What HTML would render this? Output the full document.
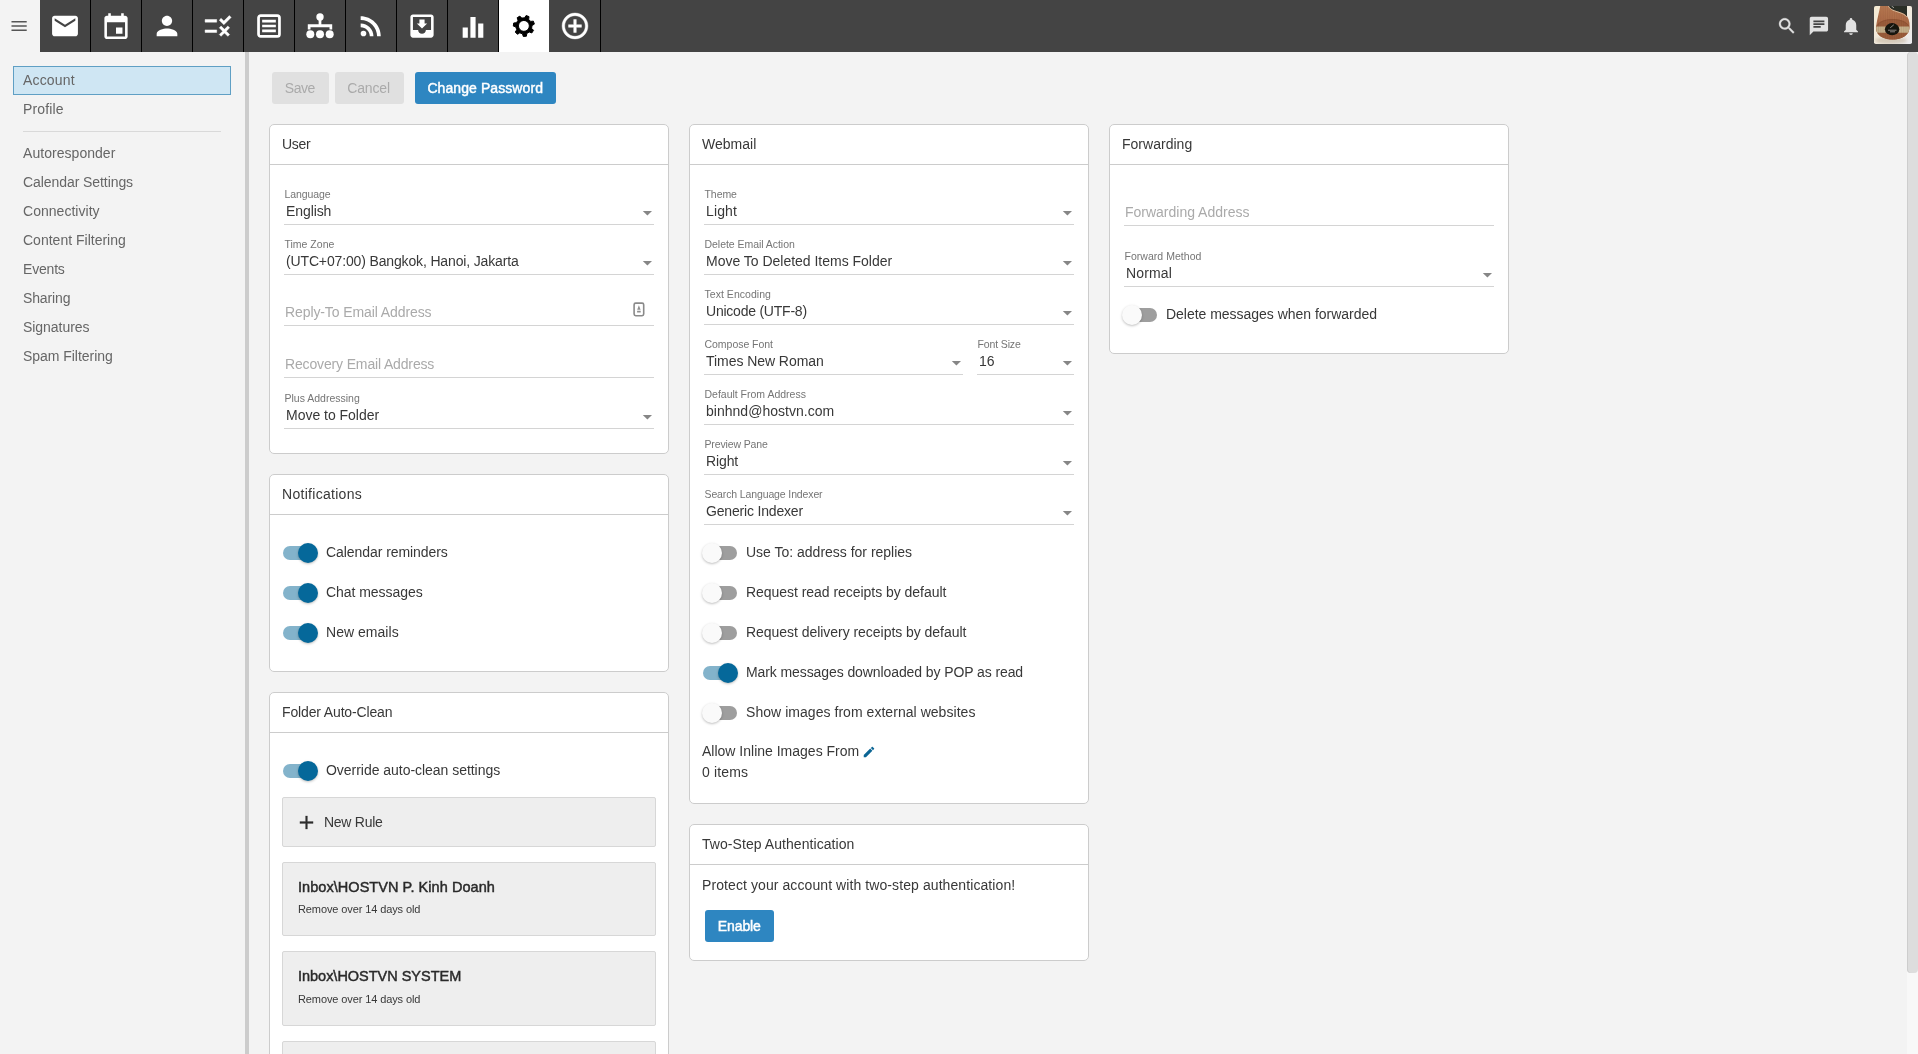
<!DOCTYPE html><html lang="en"><head><meta charset="utf-8"><title>Settings - Account</title><style>
*{box-sizing:border-box;margin:0;padding:0}
html,body{width:1918px;height:1054px;overflow:hidden}
body{background:#f3f3f3;font-family:"Liberation Sans",sans-serif;font-size:14px;color:#383838;position:relative}
#w{position:absolute;left:0;top:0;width:1918px;height:1054px;overflow:hidden;will-change:transform}
.a,.ic,.t{position:absolute}
.t{white-space:nowrap;line-height:20px;font-size:14px}
.ic{display:block}
#top{left:40px;top:0;width:1878px;height:52px;background:#444}
.sep{top:0;width:1px;height:52px;background:#000}
.side{color:#666}
.card{background:#fff;border:1px solid #ccc;border-radius:5px}
.hd{height:1px;background:#ccc}
.ul{height:1px;background:#d4d4d4}
.lb{font-size:10.5px;line-height:14px;color:#757575}
.ph{color:#aaa}
.btn{border-radius:3px;height:32px}
.bar{width:34px;height:14px;border-radius:7px}
.th{width:20px;height:20px;border-radius:50%;box-shadow:0 1px 2.5px rgba(0,0,0,.26)}
.rule{background:#eee;border:1px solid #d7d7d7;border-radius:2px}
.md{-webkit-text-stroke:.45px currentColor}
.b{font-size:14.5px;color:#2a2a2a}
.sm{font-size:11px;line-height:14px}
</style></head><body><div id="w">
<div class="a" id="top"></div>
<svg class="ic" style="left:8px;top:15px" width="23" height="23" viewBox="0 0 23 23"><g transform="translate(0.950 0.850) scale(0.84583)"><path fill="#555" d="M3 18h18v-2H3v2zm0-5h18v-2H3v2zm0-7v2h18V6H3z"/></g></svg>
<svg class="ic" style="left:49px;top:10px" width="33" height="33" viewBox="0 0 33 33"><g transform="translate(0.500 0.500) scale(1.29167)"><path fill="#fff" d="M20 4H4c-1.1 0-1.99.9-1.99 2L2 18c0 1.1.9 2 2 2h16c1.1 0 2-.9 2-2V6c0-1.1-.9-2-2-2zm0 4l-8 5-8-5V6l8 5 8-5v2z"/></g></svg>
<div class="a sep" style="left:90px"></div>
<svg class="ic" style="left:100px;top:11px" width="33" height="33" viewBox="0 0 33 33"><g transform="translate(0.500 0.900) scale(1.29167)"><path fill="#fff" d="M17 12h-5v5h5v-5zM16 1v2H8V1H6v2H5c-1.11 0-1.99.9-1.99 2L3 19c0 1.1.89 2 2 2h14c1.1 0 2-.9 2-2V5c0-1.1-.9-2-2-2h-1V1h-2zm3 18H5V8h14v11z"/></g></svg>
<div class="a sep" style="left:141px"></div>
<svg class="ic" style="left:151px;top:10px" width="33" height="33" viewBox="0 0 33 33"><g transform="translate(0.500 0.500) scale(1.29167)"><path fill="#fff" d="M12 12c2.21 0 4-1.79 4-4s-1.79-4-4-4-4 1.79-4 4 1.79 4 4 4zm0 2c-2.67 0-8 1.34-8 4v2h16v-2c0-2.66-5.33-4-8-4z"/></g></svg>
<div class="a sep" style="left:192px"></div>
<svg class="ic" style="left:202px;top:10px" width="33" height="33" viewBox="0 0 33 33"><g transform="translate(0.500 0.500) scale(1.29167)"><path fill="#fff" stroke="#fff" stroke-width="0.35" d="M16.54 11L13 7.46l1.41-1.41 2.12 2.12 4.24-4.24 1.41 1.41L16.54 11zM11 7H2v2h9V7zm10 6.41L19.59 12 17 14.59 14.41 12 13 13.41 15.59 16 13 18.59 14.41 20 17 17.41 19.59 20 21 18.59 18.41 16 21 13.41zM11 15H2v2h9v-2z"/></g></svg>
<div class="a sep" style="left:243px"></div>
<svg class="ic" style="left:253px;top:10px" width="33" height="33" viewBox="0 0 33 33"><g transform="translate(0.500 0.500) scale(1.29167)"><rect x="3.9" y="3.9" width="16.2" height="16.2" rx="1.7" fill="none" stroke="#fff" stroke-width="2.1"/><path fill="#fff" d="M6.7 7.2h10.6v2H6.7zM6.7 11h10.6v2H6.7zM6.7 14.800h10.6v2H6.7z"/></g></svg>
<div class="a sep" style="left:294px"></div>
<svg class="ic" style="left:304px;top:10px" width="33" height="33" viewBox="0 0 33 33"><g transform="translate(0.500 0.500) scale(1.29167)"><g fill="#fff"><circle cx="12" cy="5" r="2.85"/><circle cx="4.500" cy="18.300" r="3.100"/><circle cx="12" cy="18.300" r="3.100"/><circle cx="19.500" cy="18.300" r="3.100"/><path d="M10.950 7h2.100v3.700h8.400v4.100h-2.100v-1.900H4.650v1.900H2.550v-4.100h8.400z"/></g></g></svg>
<div class="a sep" style="left:345px"></div>
<svg class="ic" style="left:355px;top:10px" width="33" height="33" viewBox="0 0 33 33"><g transform="translate(0.500 0.500) scale(1.29167)"><path fill="#fff" d="M6.18 15.64a2.18 2.18 0 1 0 0 4.36 2.18 2.18 0 0 0 0-4.36zM4 4.44v2.83c7.03 0 12.73 5.7 12.73 12.73h2.83c0-8.59-6.97-15.56-15.56-15.56zm0 5.66v2.83c3.9 0 7.07 3.17 7.07 7.07h2.83c0-5.47-4.43-9.9-9.9-9.9z"/></g></svg>
<div class="a sep" style="left:396px"></div>
<svg class="ic" style="left:406px;top:10px" width="33" height="33" viewBox="0 0 33 33"><g transform="translate(0.500 0.500) scale(1.29167)"><path fill="#fff" d="M19 3H4.99c-1.11 0-1.98.9-1.98 2L3 19c0 1.1.88 2 1.99 2H19c1.1 0 2-.9 2-2V5c0-1.1-.9-2-2-2zm0 12h-4c0 1.66-1.35 3-3 3s-3-1.34-3-3H4.99V5H19v10zm-3-5h-2V7h-4v3H8l4 4 4-4z"/></g></svg>
<div class="a sep" style="left:447px"></div>
<svg class="ic" style="left:457px;top:11px" width="33" height="33" viewBox="0 0 33 33"><g transform="translate(0.500 0.900) scale(1.29167)"><path fill="#fff" d="M10 20h4V4h-4v16zm-6 0h4v-8H4v8zM16 9v11h4V9h-4z"/></g></svg>
<div class="a sep" style="left:498px"></div>
<div class="a" style="left:499px;top:0;width:50px;height:52px;background:#fff"></div>
<svg class="ic" style="left:499px;top:0" width="50" height="52" viewBox="0 0 50 52"><path fill="#000" stroke="#000" stroke-width="1" stroke-linejoin="round" fill-rule="evenodd" d="M27.78 33.47L27.43 36.19L24.31 36.48L23.47 33.87L20.77 32.87L18.43 34.30L16.26 32.04L17.77 29.75L16.88 27.02L14.30 26.07L14.71 22.97L17.45 22.73L19.02 20.33L18.16 17.72L20.84 16.11L22.73 18.10L25.59 17.83L27.09 15.53L30.03 16.62L29.65 19.34L31.64 21.41L34.37 21.14L35.35 24.12L32.99 25.52L32.61 28.37L34.52 30.34L32.81 32.96L30.24 31.99ZM19.45 25.90a5.45 5.45 0 1 0 10.9 0a5.45 5.45 0 1 0 -10.9 0Z"/></svg>
<svg class="ic" style="left:559px;top:10px" width="33" height="33" viewBox="0 0 33 33"><g transform="translate(0.500 0.500) scale(1.29167)"><path fill="#fff" stroke="#fff" stroke-width="0.35" d="M13 7h-2v4H7v2h4v4h2v-4h4v-2h-4V7zm-1-5C6.48 2 2 6.48 2 12s4.48 10 10 10 10-4.48 10-10S17.52 2 12 2zm0 18c-4.41 0-8-3.59-8-8s3.59-8 8-8 8 3.59 8 8-3.59 8-8 8z"/></g></svg>
<div class="a sep" style="left:600px"></div>
<svg class="ic" style="left:1776px;top:15px" width="23" height="23" viewBox="0 0 23 23"><g transform="translate(0.400 0.500) scale(0.87500)"><path fill="#e2e2e2" stroke="#e2e2e2" stroke-width="0.35" d="M15.5 14h-.79l-.28-.27C15.41 12.59 16 11.11 16 9.5 16 5.91 13.09 3 9.5 3S3 5.910 3 9.5 5.91 16 9.5 16c1.61 0 3.09-.59 4.23-1.57l.27.28v.79l5 4.990L20.49 19l-4.990-5zm-6 0C7.01 14 5 11.99 5 9.5S7.01 5 9.5 5 14 7.01 14 9.500 11.99 14 9.5 14z"/></g></svg>
<svg class="ic" style="left:1807px;top:15px" width="24" height="24" viewBox="0 0 24 24"><g transform="translate(0.900 0.000) scale(0.91667)"><path fill="#e2e2e2" d="M20 2H4c-1.1 0-1.99.9-1.99 2L2 22l4-4h14c1.1 0 2-.9 2-2V4c0-1.1-.9-2-2-2zM6 9h12v2H6V9zm8 5H6v-2h8v2zm4-6H6V6h12v2z"/></g></svg>
<svg class="ic" style="left:1840px;top:15px" width="23" height="23" viewBox="0 0 23 23"><g transform="translate(0.500 0.700) scale(0.87500)"><path fill="#e2e2e2" d="M12 22c1.1 0 2-.9 2-2h-4c0 1.1.89 2 2 2zm6-6v-5c0-3.07-1.640-5.640-4.5-6.320V4c0-.83-.67-1.5-1.5-1.5s-1.5.67-1.5 1.500v.68C7.63 5.36 6 7.92 6 11v5l-2 2v1h16v-1l-2-2z"/></g></svg>
<svg class="ic" style="left:1874px;top:6px" width="38" height="38" viewBox="0 0 38 38"><defs><clipPath id="av"><rect width="38" height="38" rx="1.800"/></clipPath><clipPath id="hd"><path d="M6.400-1L32.500-1 33 10C35.500 14 36.300 19 35.100 24 33.200 30.500 26 33.600 18.700 33.600 10 33.600 3 30 2.200 23.500 1.600 18 4.500 10 6.400-1z"/></clipPath><linearGradient id="bg" x1="0" y1="0" x2="1" y2="1"><stop offset="0" stop-color="#f5ead2"/><stop offset=".6" stop-color="#f1ebe0"/><stop offset="1" stop-color="#ecebef"/></linearGradient><linearGradient id="wd" x1="0" y1="0" x2="0" y2="1"><stop offset="0" stop-color="#b67853"/><stop offset=".45" stop-color="#ad6c48"/><stop offset="1" stop-color="#9d5f3e"/></linearGradient><filter id="bl2" x="-20%" y="-50%" width="140%" height="200%"><feGaussianBlur stdDeviation="1.600"/></filter><filter id="bl" x="-10%" y="-10%" width="120%" height="120%"><feGaussianBlur stdDeviation=".5"/></filter></defs><g clip-path="url(#av)"><rect width="38" height="38" fill="url(#bg)"/><g filter="url(#bl)"><ellipse cx="17" cy="34.500" rx="16" ry="3.500" fill="#bfae98" opacity=".55" filter="url(#bl2)"/><path d="M6.400-1L32.500-1 33 10C35.500 14 36.300 19 35.100 24 33.200 30.500 26 33.600 18.700 33.600 10 33.600 3 30 2.200 23.500 1.600 18 4.500 10 6.400-1z" fill="url(#wd)"/><path d="M2.200 22.500C2.200 16.500 9 13 18.700 13 28.500 13 35.300 16.800 35.300 22.500 35.300 29 28 33.500 18.700 33.500 9.500 33.500 2.200 29.500 2.200 22.500z" fill="#9a5c3b"/><path d="M2.400 21.500C3.500 16.500 10 13.600 18.700 13.600 27.500 13.600 34.200 16.800 35.100 21.500" fill="none" stroke="#8a4e30" stroke-width=".8" opacity=".7"/><path d="M2.300 20.500H35.200C35.500 22.800 35 25 34.200 26.800H3.200C2.300 24.800 2 22.500 2.300 20.500z" fill="#c5b08b"/><g clip-path="url(#hd)"><path d="M4.5 0V34M6.8 0V34M9.1 0V34M11.3 0V34M13.6 0V34M15.9 0V34M18.2 0V34M20.5 0V34M22.8 0V34M25.1 0V34M27.4 0V34M29.7 0V34M32.0 0V34M34.2 0V34" stroke="#5e3018" stroke-width=".45" opacity=".22" fill="none"/></g><path d="M14.300-1L33-1 33 10.500C31 7.500 27.500 6.800 23 5.300 19 4 15.800 3 14.300-1z" fill="#2b2e27"/><path d="M14-1C15.500 3.300 19 4.400 23 5.700 27.500 7.200 30.800 8 32.800 11" fill="none" stroke="#e6d6b8" stroke-width=".7"/><path d="M17.500 0L20 1.800" stroke="#9a9c98" stroke-width="1"/><ellipse cx="18.100" cy="23.200" rx="7.200" ry="6.100" fill="#15130f"/><path d="M16.200 21.800L19.800 18.800M14 24.200h8.500M16 25.800h5" stroke="#bdbab2" stroke-width=".7" fill="none"/></g></g></svg>
<div class="a" style="left:13px;top:66px;width:218px;height:29px;background:#cfe6f3;border:1px solid #5f9fc4"></div>
<div class="t side" style="left:23px;top:70.37px;letter-spacing:0.172px;">Account</div>
<div class="t side" style="left:23px;top:99.37px;letter-spacing:0.135px;">Profile</div>
<div class="t side" style="left:23px;top:143.37px;letter-spacing:0.043px;">Autoresponder</div>
<div class="t side" style="left:23px;top:172.37px;letter-spacing:-0.073px;">Calendar Settings</div>
<div class="t side" style="left:23px;top:201.37px;letter-spacing:0.032px;">Connectivity</div>
<div class="t side" style="left:23px;top:230.37px;letter-spacing:0.006px;">Content Filtering</div>
<div class="t side" style="left:23px;top:259.37px;letter-spacing:-0.188px;">Events</div>
<div class="t side" style="left:23px;top:288.37px;letter-spacing:-0.130px;">Sharing</div>
<div class="t side" style="left:23px;top:317.37px;letter-spacing:-0.037px;">Signatures</div>
<div class="t side" style="left:23px;top:346.37px;letter-spacing:-0.036px;">Spam Filtering</div>
<div class="a" style="left:23px;top:131px;width:198px;height:1px;background:#d9d9d9"></div>
<div class="a" style="left:245px;top:52px;width:4px;height:1002px;background:#ccc"></div>
<div class="a btn" style="left:272px;top:72px;width:57px;background:#e0e0e0"></div>
<div class="t " style="left:284.8px;top:78.37px;letter-spacing:-0.448px;color:#aaa;">Save</div>
<div class="a btn" style="left:335px;top:72px;width:69px;background:#e0e0e0"></div>
<div class="t " style="left:347.3px;top:78.37px;letter-spacing:-0.164px;color:#aaa;">Cancel</div>
<div class="a btn" style="left:415px;top:72px;width:141px;background:#2e86c1"></div>
<div class="t md" style="left:427.4px;top:78.37px;letter-spacing:0.082px;color:#fff;">Change Password</div>
<div class="a card" style="left:269px;top:124px;width:400px;height:330px"></div>
<div class="a hd" style="left:270px;top:164px;width:398px"></div>
<div class="t " style="left:282px;top:134.37px;letter-spacing:-0.277px;">User</div>
<div class="a ul" style="left:284px;top:224px;width:370px"></div>
<div class="t lb" style="left:284.5px;top:187.03px;letter-spacing:-0.090px;">Language</div>
<div class="t " style="left:286px;top:201.37px;letter-spacing:-0.094px;">English</div>
<svg class="ic" style="left:642px;top:210px" width="12" height="7" viewBox="0 0 12 7"><path fill="#868686" d="M.8 1h9.200L5.400 5.400z"/></svg>
<div class="a ul" style="left:284px;top:274px;width:370px"></div>
<div class="t lb" style="left:284.5px;top:237.03px;letter-spacing:0.002px;">Time Zone</div>
<div class="t " style="left:286px;top:251.37px;letter-spacing:-0.146px;">(UTC+07:00) Bangkok, Hanoi, Jakarta</div>
<svg class="ic" style="left:642px;top:260px" width="12" height="7" viewBox="0 0 12 7"><path fill="#868686" d="M.8 1h9.200L5.400 5.400z"/></svg>
<div class="a ul" style="left:284px;top:325px;width:370px"></div>
<div class="t ph" style="left:285px;top:302.37px;letter-spacing:-0.099px;">Reply-To Email Address</div>
<div class="a ul" style="left:284px;top:377px;width:370px"></div>
<div class="t ph" style="left:285px;top:354.37px;letter-spacing:-0.149px;">Recovery Email Address</div>
<div class="a ul" style="left:284px;top:428px;width:370px"></div>
<div class="t lb" style="left:284.5px;top:391.03px;letter-spacing:-0.002px;">Plus Addressing</div>
<div class="t " style="left:286px;top:405.37px;letter-spacing:-0.022px;">Move to Folder</div>
<svg class="ic" style="left:642px;top:414px" width="12" height="7" viewBox="0 0 12 7"><path fill="#868686" d="M.8 1h9.200L5.400 5.400z"/></svg>
<svg class="ic" style="left:633px;top:302px" width="12" height="15" viewBox="0 0 12 15"><rect x="1.1" y="1.1" width="9.600" height="12.600" rx="1.600" fill="none" stroke="#8a8a8a" stroke-width="1.600"/><path d="M5.900 3.200l1.700 4.600H4.200zM4.100 8.800h3.600v1.700H4.100z" fill="#8f8f8f"/></svg>
<div class="a card" style="left:269px;top:474px;width:400px;height:198px"></div>
<div class="a hd" style="left:270px;top:514px;width:398px"></div>
<div class="t " style="left:282px;top:484.37px;letter-spacing:0.291px;">Notifications</div>
<div class="a bar" style="left:283px;top:546px;background:#83b3cb"></div>
<div class="a th" style="left:298px;top:543px;background:#05689a"></div>
<div class="t " style="left:326px;top:541.87px;letter-spacing:-0.064px;">Calendar reminders</div>
<div class="a bar" style="left:283px;top:586px;background:#83b3cb"></div>
<div class="a th" style="left:298px;top:583px;background:#05689a"></div>
<div class="t " style="left:326px;top:581.87px;letter-spacing:-0.043px;">Chat messages</div>
<div class="a bar" style="left:283px;top:626px;background:#83b3cb"></div>
<div class="a th" style="left:298px;top:623px;background:#05689a"></div>
<div class="t " style="left:326px;top:621.87px;letter-spacing:0.034px;">New emails</div>
<div class="a card" style="left:269px;top:692px;width:400px;height:400px"></div>
<div class="a hd" style="left:270px;top:732px;width:398px"></div>
<div class="t " style="left:282px;top:702.37px;letter-spacing:-0.144px;">Folder Auto-Clean</div>
<div class="a bar" style="left:283px;top:764px;background:#83b3cb"></div>
<div class="a th" style="left:298px;top:761px;background:#05689a"></div>
<div class="t " style="left:326px;top:759.87px;letter-spacing:-0.033px;">Override auto-clean settings</div>
<div class="a rule" style="left:282px;top:797px;width:374px;height:50px"></div>
<svg class="ic" style="left:295px;top:811px" width="25" height="25" viewBox="0 0 25 25"><g transform="translate(0.200 0.200) scale(0.94167)"><path fill="#2e2e2e" stroke="#2e2e2e" stroke-width="0.25" d="M19 13h-6v6h-2v-6H5v-2h6V5h2v6h6v2z"/></g></svg>
<div class="t " style="left:324px;top:811.97px;letter-spacing:-0.270px;">New Rule</div>
<div class="a rule" style="left:282px;top:862px;width:374px;height:74px"></div>
<div class="t b md" style="left:298px;top:877.21px;letter-spacing:0.050px;">Inbox\HOSTVN P. Kinh Doanh</div>
<div class="t sm" style="left:298px;top:902.36px;letter-spacing:-0.107px;">Remove over 14 days old</div>
<div class="a rule" style="left:282px;top:951px;width:374px;height:75px"></div>
<div class="t b md" style="left:298px;top:966.21px;letter-spacing:-0.020px;">Inbox\HOSTVN SYSTEM</div>
<div class="t sm" style="left:298px;top:992.36px;letter-spacing:-0.107px;">Remove over 14 days old</div>
<div class="a rule" style="left:282px;top:1041px;width:374px;height:74px"></div>
<div class="a card" style="left:689px;top:124px;width:400px;height:680px"></div>
<div class="a hd" style="left:690px;top:164px;width:398px"></div>
<div class="t " style="left:702px;top:134.37px;letter-spacing:0.024px;">Webmail</div>
<div class="a ul" style="left:704px;top:224px;width:370px"></div>
<div class="t lb" style="left:704.5px;top:187.03px;letter-spacing:-0.060px;">Theme</div>
<div class="t " style="left:706px;top:201.37px;letter-spacing:0.142px;">Light</div>
<svg class="ic" style="left:1062px;top:210px" width="12" height="7" viewBox="0 0 12 7"><path fill="#868686" d="M.8 1h9.200L5.400 5.400z"/></svg>
<div class="a ul" style="left:704px;top:274px;width:370px"></div>
<div class="t lb" style="left:704.5px;top:237.03px;letter-spacing:-0.042px;">Delete Email Action</div>
<div class="t " style="left:706px;top:251.37px;letter-spacing:-0.014px;">Move To Deleted Items Folder</div>
<svg class="ic" style="left:1062px;top:260px" width="12" height="7" viewBox="0 0 12 7"><path fill="#868686" d="M.8 1h9.200L5.400 5.400z"/></svg>
<div class="a ul" style="left:704px;top:324px;width:370px"></div>
<div class="t lb" style="left:704.5px;top:287.03px;letter-spacing:0.039px;">Text Encoding</div>
<div class="t " style="left:706px;top:301.37px;letter-spacing:-0.227px;">Unicode (UTF-8)</div>
<svg class="ic" style="left:1062px;top:310px" width="12" height="7" viewBox="0 0 12 7"><path fill="#868686" d="M.8 1h9.200L5.400 5.400z"/></svg>
<div class="a ul" style="left:704px;top:374px;width:259px"></div>
<div class="t lb" style="left:704.5px;top:337.03px;letter-spacing:-0.031px;">Compose Font</div>
<div class="t " style="left:706px;top:351.37px;letter-spacing:-0.053px;">Times New Roman</div>
<svg class="ic" style="left:951px;top:360px" width="12" height="7" viewBox="0 0 12 7"><path fill="#868686" d="M.8 1h9.200L5.400 5.400z"/></svg>
<div class="a ul" style="left:977px;top:374px;width:97px"></div>
<div class="t lb" style="left:977.5px;top:337.03px;letter-spacing:-0.133px;">Font Size</div>
<div class="t " style="left:979px;top:351.37px;letter-spacing:0.075px;">16</div>
<svg class="ic" style="left:1062px;top:360px" width="12" height="7" viewBox="0 0 12 7"><path fill="#868686" d="M.8 1h9.200L5.400 5.400z"/></svg>
<div class="a ul" style="left:704px;top:424px;width:370px"></div>
<div class="t lb" style="left:704.5px;top:387.03px;letter-spacing:-0.008px;">Default From Address</div>
<div class="t " style="left:706px;top:401.37px;letter-spacing:0.018px;">binhnd@hostvn.com</div>
<svg class="ic" style="left:1062px;top:410px" width="12" height="7" viewBox="0 0 12 7"><path fill="#868686" d="M.8 1h9.200L5.400 5.400z"/></svg>
<div class="a ul" style="left:704px;top:474px;width:370px"></div>
<div class="t lb" style="left:704.5px;top:437.03px;letter-spacing:-0.139px;">Preview Pane</div>
<div class="t " style="left:706px;top:451.37px;letter-spacing:-0.105px;">Right</div>
<svg class="ic" style="left:1062px;top:460px" width="12" height="7" viewBox="0 0 12 7"><path fill="#868686" d="M.8 1h9.200L5.400 5.400z"/></svg>
<div class="a ul" style="left:704px;top:524px;width:370px"></div>
<div class="t lb" style="left:704.5px;top:487.03px;letter-spacing:-0.124px;">Search Language Indexer</div>
<div class="t " style="left:706px;top:501.37px;letter-spacing:-0.176px;">Generic Indexer</div>
<svg class="ic" style="left:1062px;top:510px" width="12" height="7" viewBox="0 0 12 7"><path fill="#868686" d="M.8 1h9.200L5.400 5.400z"/></svg>
<div class="a bar" style="left:703px;top:546px;background:#9e9e9e"></div>
<div class="a th" style="left:702px;top:543px;background:#fafafa"></div>
<div class="t " style="left:746px;top:541.87px;letter-spacing:-0.007px;">Use To: address for replies</div>
<div class="a bar" style="left:703px;top:586px;background:#9e9e9e"></div>
<div class="a th" style="left:702px;top:583px;background:#fafafa"></div>
<div class="t " style="left:746px;top:581.87px;letter-spacing:-0.038px;">Request read receipts by default</div>
<div class="a bar" style="left:703px;top:626px;background:#9e9e9e"></div>
<div class="a th" style="left:702px;top:623px;background:#fafafa"></div>
<div class="t " style="left:746px;top:621.87px;letter-spacing:-0.040px;">Request delivery receipts by default</div>
<div class="a bar" style="left:703px;top:666px;background:#83b3cb"></div>
<div class="a th" style="left:718px;top:663px;background:#05689a"></div>
<div class="t " style="left:746px;top:661.87px;letter-spacing:-0.093px;">Mark messages downloaded by POP as read</div>
<div class="a bar" style="left:703px;top:706px;background:#9e9e9e"></div>
<div class="a th" style="left:702px;top:703px;background:#fafafa"></div>
<div class="t " style="left:746px;top:701.87px;letter-spacing:0.043px;">Show images from external websites</div>
<div class="t " style="left:702px;top:741.37px;letter-spacing:0.002px;">Allow Inline Images From</div>
<svg class="ic" style="left:862px;top:745px" width="16" height="16" viewBox="0 0 16 16"><g transform="translate(0.000 0.000) scale(0.58333)"><path fill="#0b6594" d="M3 17.25V21h3.750L17.81 9.940l-3.750-3.750L3 17.250zM20.71 7.040c.39-.39.39-1.020 0-1.410l-2.340-2.340c-.39-.39-1.020-.39-1.410 0l-1.830 1.830 3.750 3.750 1.830-1.830z"/></g></svg>
<div class="t " style="left:702px;top:762.37px;letter-spacing:0.154px;">0 items</div>
<div class="a card" style="left:689px;top:824px;width:400px;height:137px"></div>
<div class="a hd" style="left:690px;top:864px;width:398px"></div>
<div class="t " style="left:702px;top:834.37px;letter-spacing:0.063px;">Two-Step Authentication</div>
<div class="t " style="left:702px;top:875.37px;letter-spacing:0.086px;">Protect your account with two-step authentication!</div>
<div class="a btn" style="left:705px;top:910px;width:69px;background:#2e86c1"></div>
<div class="t md" style="left:717.8px;top:916.37px;letter-spacing:-0.103px;color:#fff;">Enable</div>
<div class="a card" style="left:1109px;top:124px;width:400px;height:230px"></div>
<div class="a hd" style="left:1110px;top:164px;width:398px"></div>
<div class="t " style="left:1122px;top:134.37px;letter-spacing:0.017px;">Forwarding</div>
<div class="a ul" style="left:1124px;top:225px;width:370px"></div>
<div class="t ph" style="left:1125px;top:202.37px;letter-spacing:-0.005px;">Forwarding Address</div>
<div class="a ul" style="left:1124px;top:286px;width:370px"></div>
<div class="t lb" style="left:1124.5px;top:249.03px;letter-spacing:0.030px;">Forward Method</div>
<div class="t " style="left:1126px;top:263.37px;letter-spacing:0.145px;">Normal</div>
<svg class="ic" style="left:1482px;top:272px" width="12" height="7" viewBox="0 0 12 7"><path fill="#868686" d="M.8 1h9.200L5.400 5.400z"/></svg>
<div class="a bar" style="left:1123px;top:308px;background:#9e9e9e"></div>
<div class="a th" style="left:1122px;top:305px;background:#fafafa"></div>
<div class="t " style="left:1166px;top:303.87px;letter-spacing:-0.021px;">Delete messages when forwarded</div>
<div class="a" style="left:1907px;top:52px;width:11px;height:1002px;background:#f8f8f8"></div>
<div class="a" style="left:1907px;top:52px;width:11px;height:921px;background:#ddd;border-radius:4px;box-shadow:inset 1px 0 0 #cdcdcd"></div>
</div></body></html>
